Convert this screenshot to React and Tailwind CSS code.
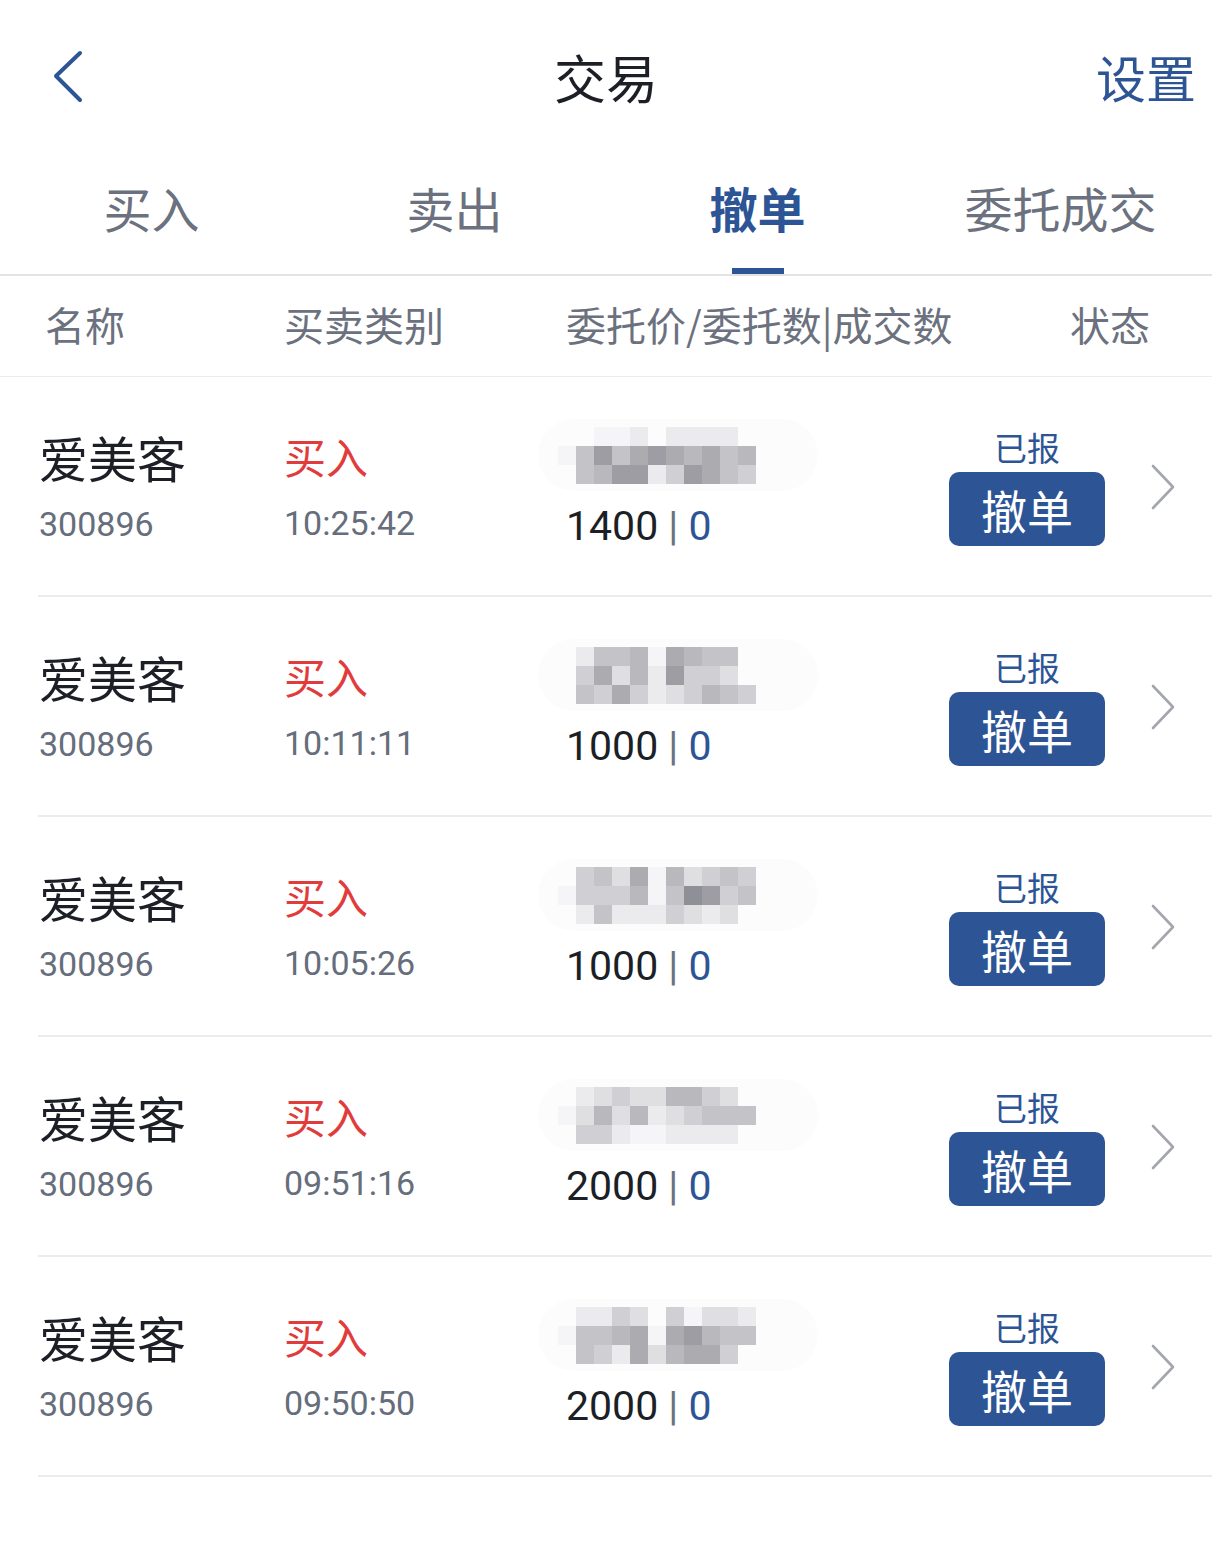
import React from "react";

const P = {
  w: "bg-transparent",
  a: "bg-[#f5f5f7]",
  b: "bg-[#ebebed]",
  c: "bg-[#dfdfe2]",
  d: "bg-[#d0d0d4]",
  e: "bg-[#c4c4c8]",
  f: "bg-[#b8b8bd]",
  g: "bg-[#ababb0]",
  h: "bg-[#9d9da3]",
  i: "bg-[#8f9097]",
};

const mosaics = [
  ["wwaabwbbbbw", "aeheghgfgef", "wefhhbdhged"],
  ["wbeefagfeew", "wdgcfbhddcw", "wedgdbcdfed"],
  ["wdecgafcded", "adddfaeihde", "wbebbbdcbcw"],
  ["wbcdccffdcw", "acfcfbcdeee", "wddbaabbbbw"],
  ["wbbdcwdaccb", "aeefgaghfee", "wedbgcfggdw"],
];

const rows = [
  { t: "10:25:42", q: "1400", m: mosaics[0] },
  { t: "10:11:11", q: "1000", m: mosaics[1] },
  { t: "10:05:26", q: "1000", m: mosaics[2] },
  { t: "09:51:16", q: "2000", m: mosaics[3] },
  { t: "09:50:50", q: "2000", m: mosaics[4] },
];

const font = "font-['Roboto','Noto_Sans_CJK_SC',sans-serif]";
const cjk = "font-['Noto_Sans_CJK_SC',sans-serif]";

function Mosaic({ m }) {
  return (
    <div className="relative h-[56px] w-[220px]">
      <div className="absolute -left-[20px] -top-[8px] h-[72px] w-[280px] rounded-[40px] bg-[#fcfcfd]" />
      <div className="relative flex flex-col">
        {m.map((r, ri) => (
          <div key={ri} className="flex">
            {r.split("").map((c, ci) => (
              <div key={ci} className={"h-[19px] w-[18px] " + P[c]} />
            ))}
          </div>
        ))}
      </div>
    </div>
  );
}

function Row({ r }) {
  return (
    <div className="ml-[38px] flex h-[220px] border-b-2 border-[#ebebeb] pl-[1px]">
      <div className="flex w-[245px] flex-col pt-[51px]">
        <div className={cjk + " h-[58px] text-[49px] leading-[58px] text-[#1c1f26]"}>爱美客</div>
        <div className={font + " mt-[18px] text-[34px] leading-[40px] text-[#666d7b]"}>300896</div>
      </div>
      <div className="flex w-[274px] flex-col pt-[51px]">
        <div className={cjk + " h-[56px] text-[42px] leading-[56px] text-[#e23b3b]"}>买入</div>
        <div className={font + " mt-[19px] text-[34px] leading-[40px] text-[#666d7b]"}>{r.t}</div>
      </div>
      <div className="flex w-[391px] flex-col pt-[50px]">
        <Mosaic m={r.m} />
        <div className={font + " mt-[22px] pl-[8px] text-[41px] leading-[42px] text-[#1c1f26]"}>
          {r.q} <span className="text-[#6b7280]">|</span> <span className="text-[#2d5596]">0</span>
        </div>
      </div>
      <div className="flex w-[156px] flex-col items-center pt-[50px]">
        <div className={cjk + " h-[40px] text-[33px] leading-[40px] text-[#2d5596]"}>已报</div>
        <div className={cjk + " mt-[5px] flex h-[74px] w-[156px] items-center justify-center rounded-[10px] bg-[#2d5596] text-[46px] text-white"}>
          撤单
        </div>
      </div>
      <div className="ml-[44px] pt-[86px]">
        <svg width="28" height="48" viewBox="0 0 28 48" fill="none">
          <polyline points="4,3 24,24 4,45" stroke="#a3a6ad" strokeWidth="2.6" strokeLinecap="round" strokeLinejoin="round" />
        </svg>
      </div>
    </div>
  );
}

export default function App() {
  return (
    <div className="min-h-[1543px] w-[1212px] bg-white">
      <div className="grid h-[150px] grid-cols-[1fr_auto_1fr] items-center">
        <div className="pl-[51px] pt-[2px]">
          <svg width="34" height="54" viewBox="0 0 34 54" fill="none">
            <polyline points="29,4 5,27 29,51" stroke="#2d5596" strokeWidth="4" strokeLinecap="round" strokeLinejoin="round" />
          </svg>
        </div>
        <div className={cjk + " pt-[4px] text-[52px] leading-none text-[#1c1f26]"}>交易</div>
        <div className={cjk + " pr-[16px] pt-[2px] text-right text-[50px] leading-none text-[#2d5596]"}>设置</div>
      </div>
      <div className="grid h-[126px] grid-cols-4 border-b-2 border-[#e3e3e3]">
        {["买入", "卖出", "撤单", "委托成交"].map((t, i) => (
          <div key={t} className="flex flex-col items-center pt-[25px]">
            <div
              className={
                cjk +
                " h-[64px] text-[48px] leading-[64px] " +
                (i === 2 ? "font-bold text-[#2d5596]" : "text-[#6b717e]")
              }
            >
              {t}
            </div>
            {i === 2 ? <div className="mt-[29px] h-[6px] w-[52px] bg-[#2d5596]" /> : null}
          </div>
        ))}
      </div>
      <div className={cjk + " flex h-[101px] items-center border-b border-[#ececec] pb-[4px] text-[40px] text-[#6b717e]"}>
        <div className="w-[284px] pl-[45px]">名称</div>
        <div className="w-[282px]">买卖类别</div>
        <div className="w-[504px]">委托价/委托数|成交数</div>
        <div>状态</div>
      </div>
      {rows.map((r, i) => (
        <Row key={i} r={r} />
      ))}
    </div>
  );
}
